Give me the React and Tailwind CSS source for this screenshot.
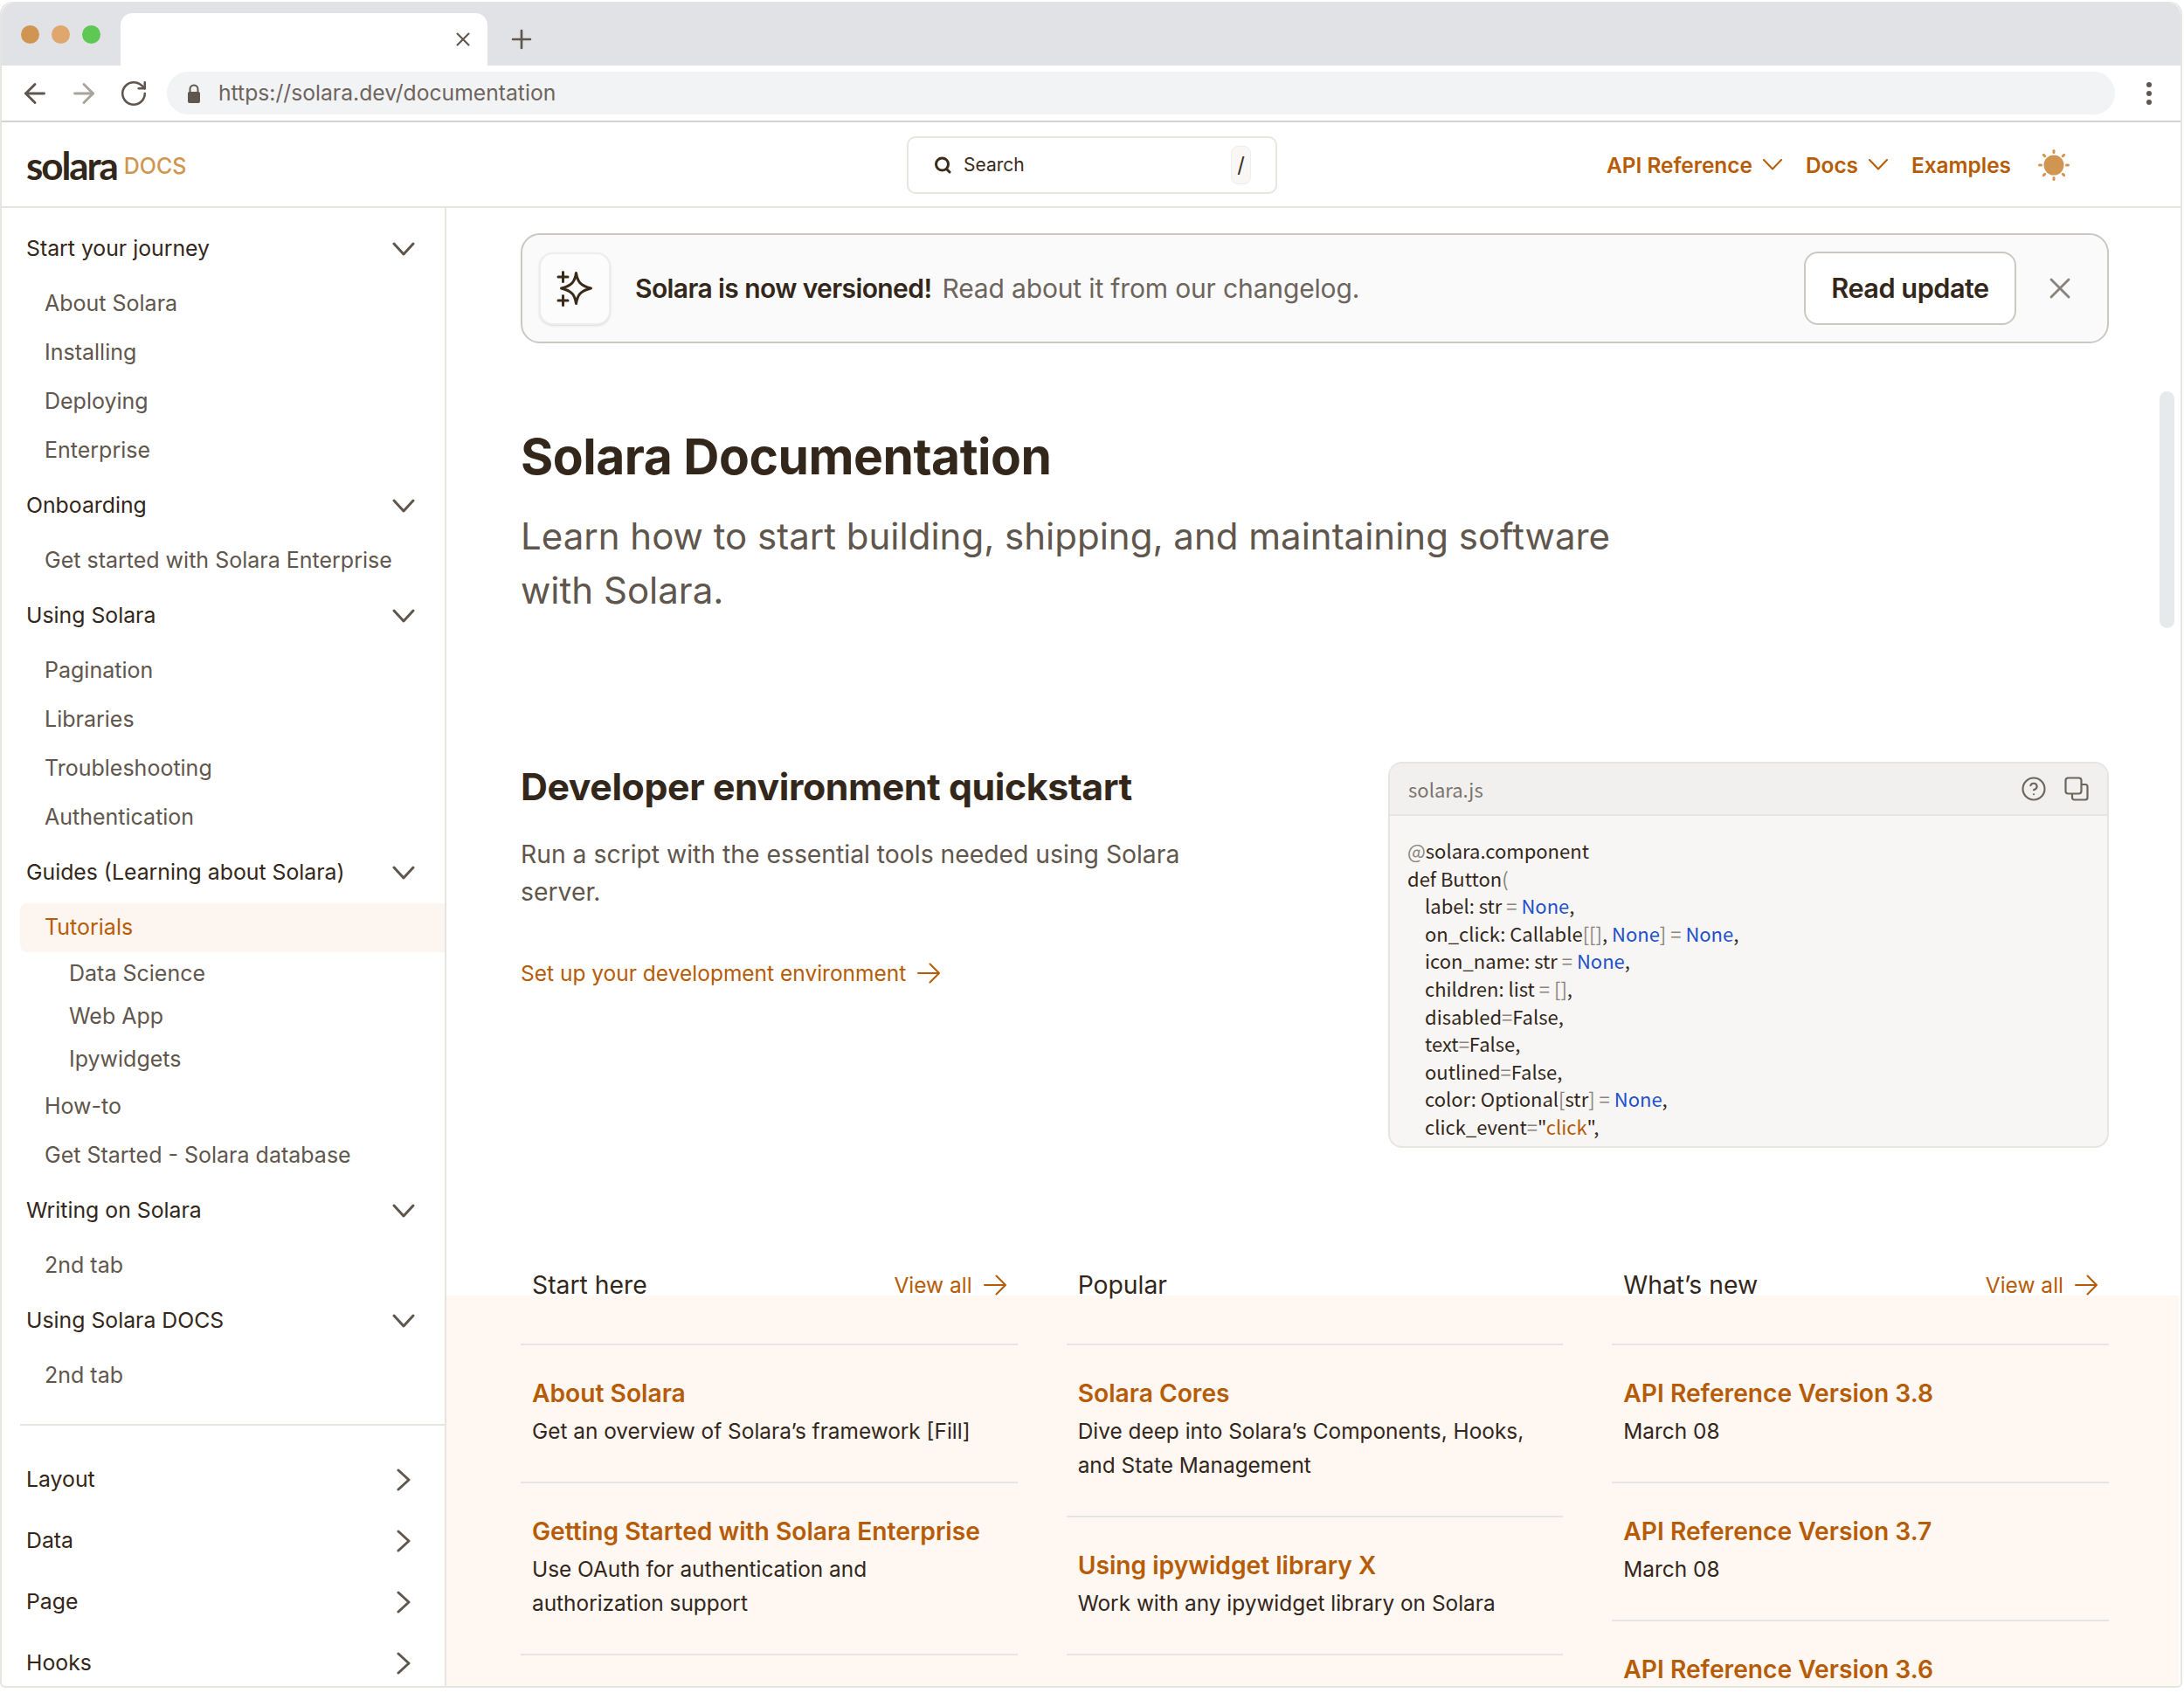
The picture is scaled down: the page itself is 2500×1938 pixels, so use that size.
import { ArrowLeft, ArrowRight, CircleHelp, Plus, RotateCw, X } from "lucide-react";

const SIDEBAR_GROUPS = [
  { title: "Start your journey", items: ["About Solara", "Installing", "Deploying", "Enterprise"] },
  { title: "Onboarding", items: ["Get started with Solara Enterprise"] },
  { title: "Using Solara", items: ["Pagination", "Libraries", "Troubleshooting", "Authentication"] },
  {
    title: "Guides (Learning about Solara)",
    items: [
      { label: "Tutorials", active: true },
      { label: "Data Science", sub: true },
      { label: "Web App", sub: true },
      { label: "Ipywidgets", sub: true, last: true },
      "How-to",
      "Get Started - Solara database",
    ],
  },
  { title: "Writing on Solara", items: ["2nd tab"] },
  { title: "Using Solara DOCS", items: ["2nd tab"] },
];

const COLLAPSED = ["Layout", "Data", "Page", "Hooks"];

const COLUMNS = [
  {
    title: "Start here",
    viewAll: true,
    cards: [
      { title: "About Solara", desc: ["Get an overview of Solara’s framework [Fill]"] },
      { title: "Getting Started with Solara Enterprise", desc: ["Use OAuth for authentication and", "authorization support"] },
    ],
  },
  {
    title: "Popular",
    cards: [
      { title: "Solara Cores", desc: ["Dive deep into Solara’s Components, Hooks,", "and State Management"] },
      { title: "Using ipywidget library X", desc: ["Work with any ipywidget library on Solara"] },
    ],
  },
  {
    title: "What’s new",
    viewAll: true,
    cards: [
      { title: "API Reference Version 3.8", desc: ["March 08"] },
      { title: "API Reference Version 3.7", desc: ["March 08"] },
      { title: "API Reference Version 3.6", desc: [] },
    ],
  },
];

function Kw({ children }) {
  return <span className="text-[#1f4fc9]">{children}</span>;
}

function Punct({ children }) {
  return <span className="text-[#8a837b]">{children}</span>;
}

const CODE_LINES = [
  <><Punct>@</Punct>solara.component</>,
  <>def Button<Punct>(</Punct></>,
  <>label: str <Punct>=</Punct> <Kw>None</Kw>,</>,
  <>on_click: Callable<Punct>[[]</Punct>, <Kw>None</Kw><Punct>]</Punct> <Punct>=</Punct> <Kw>None</Kw>,</>,
  <>icon_name: str <Punct>=</Punct> <Kw>None</Kw>,</>,
  <>children: list <Punct>=</Punct> <Punct>[]</Punct>,</>,
  <>disabled<Punct>=</Punct>False,</>,
  <>text<Punct>=</Punct>False,</>,
  <>outlined<Punct>=</Punct>False,</>,
  <>color: Optional<Punct>[</Punct>str<Punct>]</Punct> <Punct>=</Punct> <Kw>None</Kw>,</>,
  <>click_event<Punct>=</Punct>"<span className="text-[#b65c06]">click</span>",</>,
];

function SunIcon() {
  const rays = [0, 45, 90, 135, 180, 225, 270, 315];
  return (
    <svg width="36" height="36" viewBox="0 0 36 36" className="shrink-0">
      <circle cx="18" cy="18" r="11.5" fill="#d09550" />
      {rays.map((deg) => (
        <line key={deg} x1="18" y1="1.5" x2="18" y2="3.5" stroke="#d09550" strokeWidth="3" strokeLinecap="round" transform={`rotate(${deg} 18 18)`} />
      ))}
    </svg>
  );
}

function SparkleIcon() {
  return (
    <svg width="44" height="44" viewBox="0 0 44 44" fill="none" stroke="#3a2a1a" strokeWidth="3" strokeLinecap="round" strokeLinejoin="round">
      <path d="M23.500 4.500 C25 14 28 19 40.500 22 C28 25 25 30 23.500 39.500 C22 30 19 25 6.500 22 C19 19 22 14 23.500 4.500 Z" />
      <path d="M8.500 3.500 V14.500 M3 9 H14" />
      <path d="M8.500 30.500 V41.500 M3 36 H14" />
    </svg>
  );
}

function NavChevron() {
  return (
    <svg width="22" height="13" viewBox="0 0 22 13" fill="none" stroke="currentColor" strokeWidth="2" strokeLinecap="round" strokeLinejoin="round" className="ml-[12px] shrink-0">
      <path d="M1 1 L11 11.500 L21 1" />
    </svg>
  );
}

function SideChevronDown() {
  return (
    <svg width="26" height="16" viewBox="0 0 26 16" fill="none" stroke="#5f564d" strokeWidth="3" strokeLinecap="round" strokeLinejoin="round" className="shrink-0">
      <path d="M2 2 L13 14 L24 2" />
    </svg>
  );
}

function SideChevronRight() {
  return (
    <svg width="16" height="26" viewBox="0 0 16 26" fill="none" stroke="#5f564d" strokeWidth="3" strokeLinecap="round" strokeLinejoin="round" className="shrink-0">
      <path d="M2 2 L14 13 L2 24" />
    </svg>
  );
}

function LongArrow() {
  return (
    <svg width="26" height="24" viewBox="0 0 26 24" fill="none" stroke="currentColor" strokeWidth="2" strokeLinecap="round" strokeLinejoin="round" className="ml-[13px] shrink-0">
      <path d="M1 12 H25 M14.500 1.500 L25 12 L14.500 22.500" />
    </svg>
  );
}

function ChromeBar() {
  return (
    <div className="flex h-[72px] items-end rounded-t-[14px] bg-[#e0e2e6]">
      <div className="flex h-[60px] w-[136px] shrink-0 items-start gap-[14px] pl-[22px] pt-[14px]">
        <span className="h-[21px] w-[21px] rounded-full bg-[#d09550]" />
        <span className="h-[21px] w-[21px] rounded-full bg-[#dfa76d]" />
        <span className="h-[21px] w-[21px] rounded-full bg-[#5fc854]" />
      </div>
      <div className="flex h-[60px] w-[420px] items-center justify-end rounded-t-[14px] bg-white pr-[15px]">
        <X size={26} strokeWidth={1.9} className="text-[#5f564d]" />
      </div>
      <div className="flex h-[60px] items-center pl-[22px]">
        <Plus size={34} strokeWidth={1.9} className="text-[#5f564d]" />
      </div>
    </div>
  );
}

function AddressBar() {
  return (
    <div className="flex h-[65px] items-center border-b-2 border-[#d4d3d1] bg-white">
      <div className="flex w-[189px] shrink-0 items-center pl-[20px]">
        <ArrowLeft size={36} strokeWidth={1.9} className="text-[#5f564d]" />
        <ArrowRight size={36} strokeWidth={1.9} className="ml-[20px] text-[#a8a39d]" />
        <RotateCw size={34} strokeWidth={1.8} className="ml-[22px] text-[#5f564d]" />
      </div>
      <div className="flex h-[49px] w-[2230px] items-center rounded-full bg-[#f2f3f5] pl-[22px]">
        <svg width="18" height="24" viewBox="0 0 18 24" className="shrink-0">
          <path d="M4.500 11 V7 a4.500 4.500 0 0 1 9 0 V11" fill="none" stroke="#5f564d" strokeWidth="2" />
          <rect x="2" y="10" width="14" height="13" rx="2" fill="#5f564d" />
        </svg>
        <span className="ml-[19px] pt-[1px] font-['Inter'] text-[24.700px] text-[#6d655d]">https://solara.dev/documentation</span>
      </div>
      <div className="ml-[36px] flex flex-col gap-[4px]">
        <span className="h-[6px] w-[6px] rounded-full bg-[#5f564d]" />
        <span className="h-[6px] w-[6px] rounded-full bg-[#5f564d]" />
        <span className="h-[6px] w-[6px] rounded-full bg-[#5f564d]" />
      </div>
    </div>
  );
}

function SearchIcon() {
  return (
    <svg width="20" height="20" viewBox="0 0 20 20" fill="none" stroke="#3a2a1a" strokeWidth="3" strokeLinecap="round" className="shrink-0">
      <circle cx="9.500" cy="9" r="7" />
      <path d="M15 15 L18 18" />
    </svg>
  );
}

function TopNav() {
  return (
    <header className="flex h-[98px] items-center border-b-2 border-[#e7e5e2] bg-white pt-[2px]">
      <div className="flex w-[1036px] shrink-0 items-center pl-[28px]">
        <span className="font-['Lato'] text-[44px] font-bold tracking-[-2.100px] text-[#33261a]">solara</span>
        <span className="ml-[8px] mt-[4px] font-['Inter'] text-[25px] font-medium text-[#d09550]">DOCS</span>
      </div>
      <div className="flex h-[66px] w-[424px] shrink-0 items-center rounded-[10px] border-2 border-[#e7e5e2] pl-[29px] pr-[28px]">
        <SearchIcon />
        <span className="ml-[14px] font-['Inter'] text-[21px] text-[#3a2a1a]">Search</span>
        <span className="ml-auto flex h-[44px] w-[23px] items-center justify-center rounded-[8px] border border-[#eeedeb] bg-[#f8f7f6] font-['Inter'] text-[24px] text-[#3a2a1a]">/</span>
      </div>
      <nav className="ml-auto flex items-center pr-[127px] font-['Inter'] text-[24.400px] font-semibold text-[#b65c06]">
        <span>API Reference</span>
        <NavChevron />
        <span className="ml-[27px]">Docs</span>
        <NavChevron />
        <span className="ml-[27px]">Examples</span>
        <span className="ml-[31px]"><SunIcon /></span>
      </nav>
    </header>
  );
}

function SidebarItem({ item }) {
  const data = typeof item === "string" ? { label: item } : item;
  if (data.active) {
    return (
      <div className="ml-[21px] flex h-[56px] items-center rounded-l-[8px] bg-[#fdf5f0] pl-[28px] text-[#b65c06]">
        {data.label}
      </div>
    );
  }
  if (data.sub) {
    return (
      <div className={data.last ? "mb-[2px] flex h-[49px] items-center pl-[77px] text-[#5f564d]" : "flex h-[49px] items-center pl-[77px] text-[#5f564d]"}>
        {data.label}
      </div>
    );
  }
  return <div className="flex h-[56px] items-center pl-[49px] text-[#5f564d]">{data.label}</div>;
}

function Sidebar() {
  return (
    <aside className="w-[509px] shrink-0 overflow-hidden border-r-2 border-[#e7e5e2] pt-[19px] font-['Inter'] text-[25px]">
      <div className="flex flex-col gap-[7px]">
        {SIDEBAR_GROUPS.map((group) => (
          <div key={group.title} className="flex flex-col gap-[7px]">
            <div className="flex h-[56px] items-center justify-between pl-[28px] pr-[34px] text-[24.800px] text-[#33261a]">
              <span>{group.title}</span>
              <SideChevronDown />
            </div>
            <div>
              {group.items.map((item, i) => (
                <SidebarItem key={i} item={item} />
              ))}
            </div>
          </div>
        ))}
      </div>
      <div className="ml-[21px] mt-[27px] border-t-2 border-[#e7e5e2]" />
      <div className="mt-[34px] flex flex-col gap-[14px]">
        {COLLAPSED.map((label) => (
          <div key={label} className="flex h-[56px] items-center justify-between pl-[28px] pr-[39px] text-[24.800px] text-[#33261a]">
            <span>{label}</span>
            <SideChevronRight />
          </div>
        ))}
      </div>
    </aside>
  );
}

function Banner() {
  return (
    <div className="flex h-[126px] items-center rounded-[22px] border-2 border-[#cbc8c3] bg-[#fafafa] pl-[19px] pr-[34px]">
      <div className="flex h-[83px] w-[82px] shrink-0 items-center justify-center rounded-[16px] border-2 border-[#eeedeb] bg-[#fcfcfc] shadow-sm">
        <SparkleIcon />
      </div>
      <p className="ml-[28px] font-['Inter'] text-[30px]">
        <span className="font-semibold tracking-[-0.6px] text-[#33261a]">Solara is now versioned!</span>
        <span className="ml-[12px] tracking-[-0.15px] text-[#6d655d]">Read about it from our changelog.</span>
      </p>
      <button className="ml-auto flex h-[84px] w-[243px] items-center justify-center rounded-[16px] border-2 border-[#cbc8c3] bg-white font-['Inter'] text-[30.700px] font-semibold tracking-[-0.5px] text-[#33261a]">
        Read update
      </button>
      <X size={40} strokeWidth={1.700} className="ml-[30px] text-[#8a837b]" />
    </div>
  );
}

function CodeBlock() {
  return (
    <div className="h-[442px] w-[825px] overflow-hidden rounded-[16px] border-2 border-[#e7e5e2] bg-[#f7f6f5] font-['Noto_Sans_CJK_SC']">
      <div className="flex h-[60px] items-center border-b-2 border-[#e7e5e2] bg-[#f1f0ee] pl-[21px] pr-[21px]">
        <span className="text-[22px] text-[#7a736b]">solara.js</span>
        <CircleHelp size={30} strokeWidth={1.7} className="ml-auto text-[#6d655d]" />
        <svg width="28" height="28" viewBox="0 0 28 28" fill="none" stroke="#6d655d" strokeWidth="2.200" className="ml-[20px]">
          <rect x="1.500" y="1.500" width="18" height="18" rx="3" />
          <path d="M20 9 H24 a2.500 2.500 0 0 1 2.500 2.500 V24 a2.500 2.500 0 0 1 -2.500 2.500 H11.500 a2.500 2.500 0 0 1 -2.500 -2.500 V20" />
        </svg>
      </div>
      <div className="pl-[20px] pt-[24px] text-[22px] leading-[31.600px] text-[#33261a]">
        {CODE_LINES.map((line, i) => (
          <div key={i} className={i > 1 ? "whitespace-pre pl-[20px]" : "whitespace-pre"}>
            {line}
          </div>
        ))}
      </div>
    </div>
  );
}

function ColumnHeading({ col }) {
  return (
    <div className="relative z-10 flex h-[36px] items-center justify-between px-[13px] font-['Inter']">
      <span className="text-[28.300px] text-[#33261a]">{col.title}</span>
      {col.viewAll && (
        <span className="flex items-center text-[24.500px] text-[#b65c06]">
          View all
          <LongArrow />
        </span>
      )}
    </div>
  );
}

function Card({ card }) {
  return (
    <div className="border-t-2 border-[#e7e5e2] px-[13px] pb-[38px] pt-[37px] font-['Inter']">
      <div className="h-[36px] whitespace-nowrap text-[28.200px] font-semibold leading-[36px] text-[#b65c06]">{card.title}</div>
      <div className="mt-[6px] text-[24.400px] leading-[39px] text-[#33261a]">
        {card.desc.map((line) => (
          <div key={line}>{line}</div>
        ))}
      </div>
    </div>
  );
}

export default function App() {
  return (
    <div className="h-[1938px] w-[2500px] overflow-hidden bg-white">
      <div className="mt-[2px] flex h-[1930px] w-[2498px] flex-col overflow-hidden rounded-t-[14px] rounded-b-[6px] border-x-2 border-b-2 border-t border-[#e7e5e2]">
        <ChromeBar />
        <AddressBar />
        <TopNav />
        <div className="flex min-h-0 flex-1">
          <Sidebar />
          <main className="relative min-w-0 flex-1 overflow-hidden bg-white">
            <div className="absolute right-[7px] top-[210px] h-[271px] w-[17px] rounded-full bg-[#e8e9eb]" />
            <div className="pl-[85px] pr-[82px] pt-[29px]">
              <Banner />
              <h1 className="mt-[96px] font-['Inter'] text-[57px] font-bold leading-[68px] tracking-[-0.5px] text-[#33261a]">Solara Documentation</h1>
              <p className="mt-[26px] font-['Inter'] text-[42px] leading-[62px] text-[#5f564d]">
                Learn how to start building, shipping, and maintaining software
                <br />
                with Solara.
              </p>
              <div className="mt-[165px] flex justify-between">
                <div className="pt-[3px] font-['Inter']">
                  <h2 className="text-[42.800px] font-bold leading-[52px] tracking-[-0.4px] text-[#33261a]">Developer environment quickstart</h2>
                  <p className="mt-[30px] text-[28.300px] leading-[43px] text-[#5f564d]">
                    Run a script with the essential tools needed using Solara
                    <br />
                    server.
                  </p>
                  <div className="mt-[53px] flex h-[36px] items-center text-[24.500px] text-[#b65c06]">
                    Set up your development environment
                    <LongArrow />
                  </div>
                </div>
                <CodeBlock />
              </div>
              <div className="mt-[139px] grid grid-cols-3 gap-[56px]">
                {COLUMNS.map((col) => (
                  <ColumnHeading key={col.title} col={col} />
                ))}
              </div>
            </div>
            <div className="-mt-[6px] mr-[2px] bg-[#fef7f2] pl-[85px] pr-[80px] pt-[55px]">
              <div className="grid grid-cols-3 gap-[56px]">
                {COLUMNS.map((col) => (
                  <div key={col.title}>
                    {col.cards.map((card) => (
                      <Card key={card.title} card={card} />
                    ))}
                    <div className="border-t-2 border-[#e7e5e2]" />
                  </div>
                ))}
              </div>
              <div className="h-[200px]" />
            </div>
          </main>
        </div>
      </div>
    </div>
  );
}
